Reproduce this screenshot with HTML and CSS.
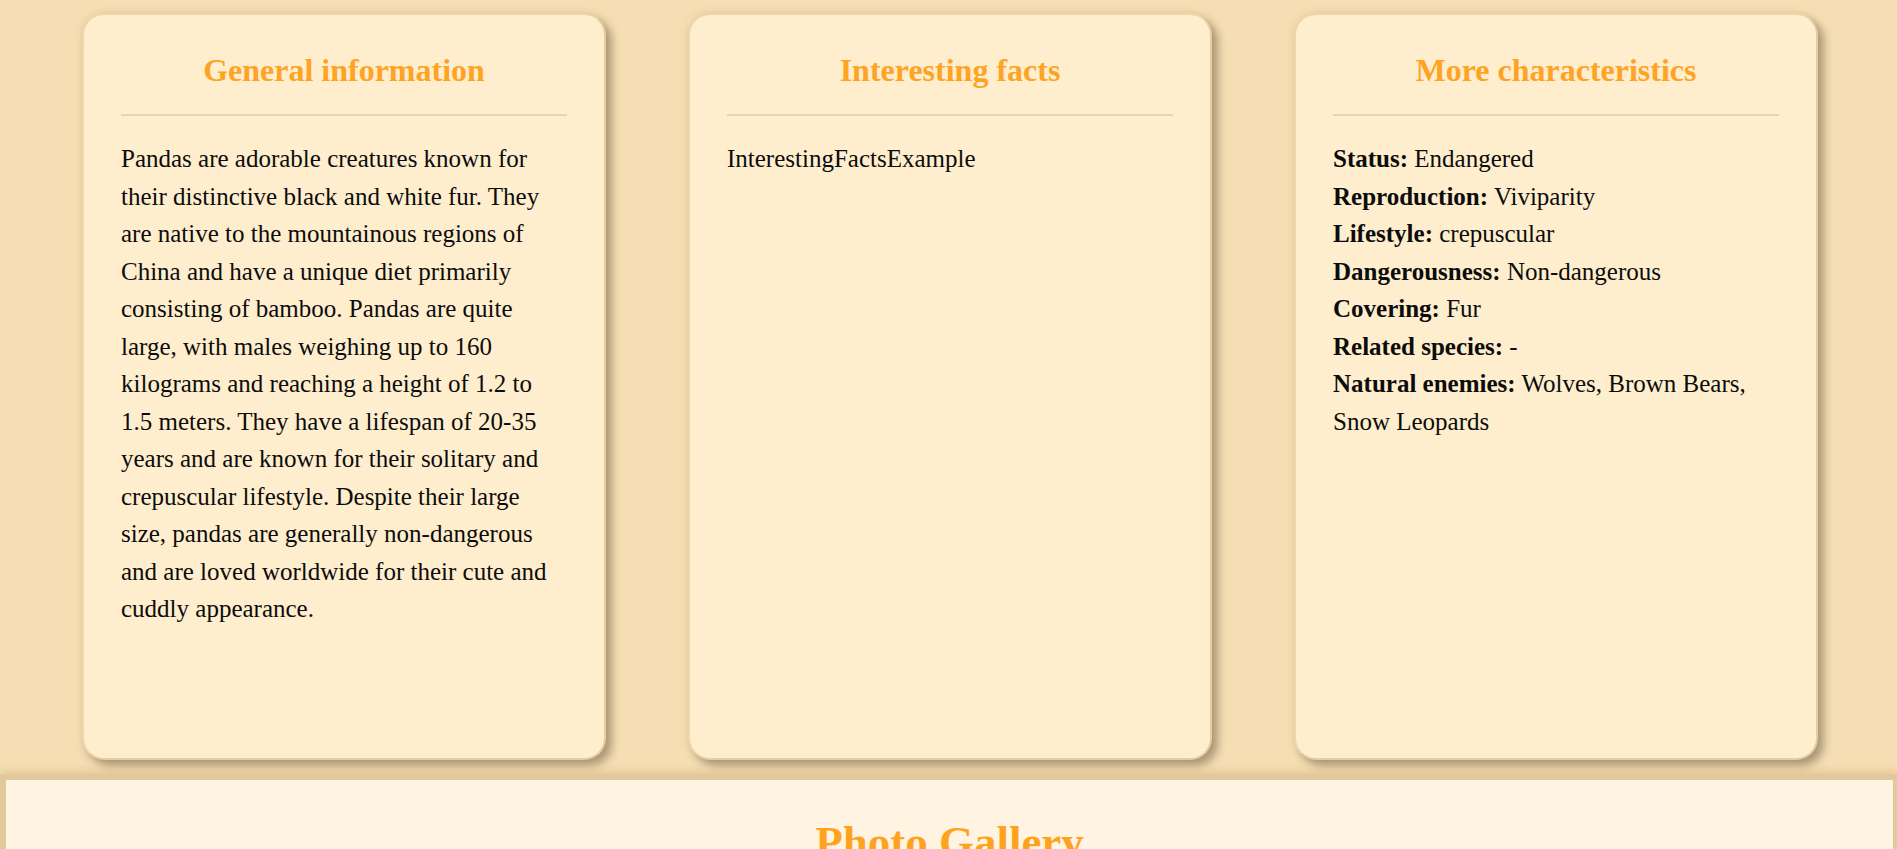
FILE: index.html
```html
<!DOCTYPE html>
<html lang="en">
<head>
<meta charset="utf-8">
<title>Panda</title>
<link rel="stylesheet" href="styles.css">
</head>
<body>
<main class="page">
  <section class="cards">
    <article class="card">
      <h2 class="card-title">General information</h2>
      <hr class="card-rule">
      <p class="card-text">Pandas are adorable creatures known for their distinctive black and white fur. They are native to the mountainous regions of China and have a unique diet primarily consisting of bamboo. Pandas are quite large, with males weighing up to 160 kilograms and reaching a height of 1.2 to 1.5 meters. They have a lifespan of 20-35 years and are known for their solitary and crepuscular lifestyle. Despite their large size, pandas are generally non-dangerous and are loved worldwide for their cute and cuddly appearance.</p>
    </article>
    <article class="card">
      <h2 class="card-title">Interesting facts</h2>
      <hr class="card-rule">
      <p class="card-text">InterestingFactsExample</p>
    </article>
    <article class="card">
      <h2 class="card-title">More characteristics</h2>
      <hr class="card-rule">
      <ul class="traits">
        <li><b>Status:</b> Endangered</li>
        <li><b>Reproduction:</b> Viviparity</li>
        <li><b>Lifestyle:</b> crepuscular</li>
        <li><b>Dangerousness:</b> Non-dangerous</li>
        <li><b>Covering:</b> Fur</li>
        <li><b>Related species:</b> -</li>
        <li><b>Natural enemies:</b> Wolves, Brown Bears, Snow Leopards</li>
      </ul>
    </article>
  </section>
  <section class="gallery">
    <h2 class="gallery-title">Photo Gallery</h2>
  </section>
</main>
</body>
</html>
```
FILE: styles.css
```css
html, body {
  margin: 0;
  padding: 0;
}
body {
  background: #f5deb3;
  font-family: "Liberation Serif", "Times New Roman", serif;
  color: #0c0c0c;
}
.page {
  display: flex;
  flex-direction: column;
}
.cards {
  display: flex;
  gap: 82px;
  padding: 13px 0 0 82px;
}
.card {
  box-sizing: border-box;
  width: 524px;
  height: 747px;
  padding: 37px 37px;
  background: #ffeecd;
  border: 2px solid #e6cd9f;
  border-top-color: #ecd6ad;
  border-left-color: #ecd6ad;
  border-radius: 22px;
  box-shadow: 6px 6px 9px rgba(60, 50, 40, 0.38), 0 0 8px rgba(210, 175, 115, 0.35);
}
.card-title {
  margin: 0;
  text-align: center;
  font-size: 32px;
  font-weight: bold;
  color: #ffa324;
}
.card-rule {
  margin: 25px 0 0;
  border: 0;
  height: 2px;
  background: #e5d6b9;
}
.card-text {
  margin: 24px 0 0;
  max-width: 434px;
  font-size: 25px;
  line-height: 37.5px;
}
.traits {
  list-style: none;
  margin: 24px 0 0;
  padding: 0;
  max-width: 434px;
  font-size: 25px;
  line-height: 37.5px;
}
.gallery {
  margin-top: 14px;
  height: 200px;
  background: #fff4e1;
  border-style: solid;
  border-color: #e2c99d;
  border-width: 6px 4px 6px 6px;
  box-shadow: 0 -3px 8px rgba(200, 165, 110, 0.4);
}
.gallery-title {
  margin: 36px 0 0;
  text-align: center;
  font-size: 45px;
  font-weight: bold;
  color: #ffa31f;
}
```
